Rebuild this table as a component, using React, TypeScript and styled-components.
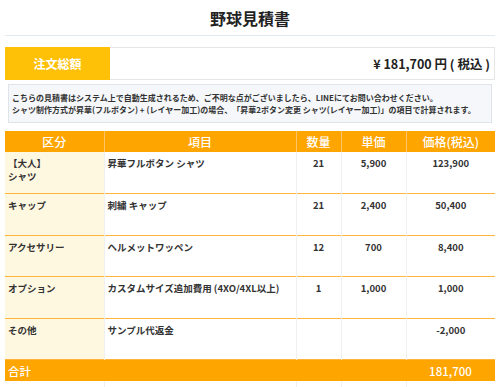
import React from 'react';
import styled, { createGlobalStyle } from 'styled-components';

const GlobalStyle = createGlobalStyle`
  html, body {
    margin: 0;
    padding: 0;
    background: #fff;
    font-family: "Noto Sans CJK JP", "Noto Sans", sans-serif;
    color: #333;
  }
`;

const Page = styled.div`
  width: 490px;
  margin: 0 5px;
`;

const Title = styled.h1`
  margin: 0;
  padding: 7px 0 6px;
  font-size: 16px;
  font-weight: 700;
  line-height: 22px;
  text-align: center;
  color: #222;
  border-bottom: 1px solid #e2e8ef;
`;

const TotalBox = styled.div`
  display: flex;
  margin-top: 11px;
  height: 33px;
  border: 1px solid #e6e6e6;
  box-sizing: border-box;
`;

const TotalLabel = styled.div`
  width: 105px;
  background: #ffc107;
  color: #fff;
  font-size: 12px;
  font-weight: 700;
  display: flex;
  align-items: center;
  justify-content: center;
  margin: -1px 0 -1px -1px;
`;

const TotalAmount = styled.div`
  flex: 1;
  display: flex;
  align-items: center;
  justify-content: flex-end;
  padding-right: 4px;
  font-size: 12.5px;
  font-weight: 700;
  color: #222;
`;

const Notice = styled.div`
  margin: 4px 3px 0;
  padding: 7px 3px 6px;
  background: #f5f7fa;
  border: 1px solid #dfe4ea;
  font-size: 8px;
  line-height: 12px;
  font-weight: 700;
  color: #333;
`;

const Table = styled.table`
  width: 490px;
  margin-top: 8px;
  border-collapse: collapse;
  table-layout: fixed;
`;

const HeadCell = styled.th`
  height: 21px;
  padding: 0;
  background: #ffa500;
  color: #fff;
  font-size: 12px;
  font-weight: 500;
  text-align: center;
  border-left: 1px solid #ffc36a;
  &:first-child {
    border-left: none;
  }
`;

const Row = styled.tr`
  height: 41.6px;
  border-bottom: 1px solid #ffb53d;
  &:last-of-type {
    border-bottom: none;
  }
`;

const Cell = styled.td<{ $align?: 'left' | 'center'; $cream?: boolean }>`
  vertical-align: top;
  padding: 5px 3px 0;
  font-size: 9.5px;
  line-height: 13px;
  font-weight: 700;
  color: #333;
  text-align: ${(p) => p.$align ?? 'left'};
  background: ${(p) => (p.$cream ? '#fff8e1' : '#fff')};
  border-left: 1px solid #f0f0f0;
  &:first-child {
    border-left: none;
  }
`;

const SumRow = styled.tr`
  height: 21px;
  background: #ffa500;
`;

const SumCell = styled.td<{ $align?: 'left' | 'center' }>`
  padding: 0 3px;
  color: #fff;
  font-size: 11.5px;
  font-weight: 500;
  text-align: ${(p) => p.$align ?? 'left'};
`;

const EmptyCell = styled.td`
  height: 40px;
  border-left: 1px solid #f0f0f0;
  &:first-child {
    border-left: none;
  }
`;

type Item = {
  category: React.ReactNode;
  name: string;
  qty: string;
  unit: string;
  price: string;
};

const items: Item[] = [
  { category: <>【大人】<br />シャツ</>, name: '昇華フルボタン シャツ', qty: '21', unit: '5,900', price: '123,900' },
  { category: 'キャップ', name: '刺繍 キャップ', qty: '21', unit: '2,400', price: '50,400' },
  { category: 'アクセサリー', name: 'ヘルメットワッペン', qty: '12', unit: '700', price: '8,400' },
  { category: 'オプション', name: 'カスタムサイズ追加費用 (4XO/4XL以上)', qty: '1', unit: '1,000', price: '1,000' },
  { category: 'その他', name: 'サンプル代返金', qty: '', unit: '', price: '-2,000' },
];

const App: React.FC = () => {
  return (
    <>
      <GlobalStyle />
      <Page>
        <Title>野球見積書</Title>
        <TotalBox>
          <TotalLabel>注文総額</TotalLabel>
          <TotalAmount>¥ 181,700 円 ( 税込 )</TotalAmount>
        </TotalBox>
        <Notice>
          こちらの見積書はシステム上で自動生成されるため、ご不明な点がございましたら、LINEにてお問い合わせください。
          <br />
          シャツ制作方式が昇華(フルボタン) + (レイヤー加工)の場合、「昇華2ボタン変更 シャツ(レイヤー加工)」の項目で計算されます。
        </Notice>
        <Table>
          <colgroup>
            <col style={{ width: 99 }} />
            <col style={{ width: 192 }} />
            <col style={{ width: 45 }} />
            <col style={{ width: 65 }} />
            <col style={{ width: 89 }} />
          </colgroup>
          <thead>
            <tr>
              <HeadCell>区分</HeadCell>
              <HeadCell>項目</HeadCell>
              <HeadCell>数量</HeadCell>
              <HeadCell>単価</HeadCell>
              <HeadCell>価格(税込)</HeadCell>
            </tr>
          </thead>
          <tbody>
            {items.map((item) => (
              <Row key={item.name}>
                <Cell $cream>{item.category}</Cell>
                <Cell>{item.name}</Cell>
                <Cell $align="center">{item.qty}</Cell>
                <Cell $align="center">{item.unit}</Cell>
                <Cell $align="center">{item.price}</Cell>
              </Row>
            ))}
            <SumRow>
              <SumCell>合計</SumCell>
              <SumCell />
              <SumCell />
              <SumCell />
              <SumCell $align="center">181,700</SumCell>
            </SumRow>
            <tr>
              <EmptyCell />
              <EmptyCell />
              <EmptyCell />
              <EmptyCell />
              <EmptyCell />
            </tr>
          </tbody>
        </Table>
      </Page>
    </>
  );
};

export default App;
